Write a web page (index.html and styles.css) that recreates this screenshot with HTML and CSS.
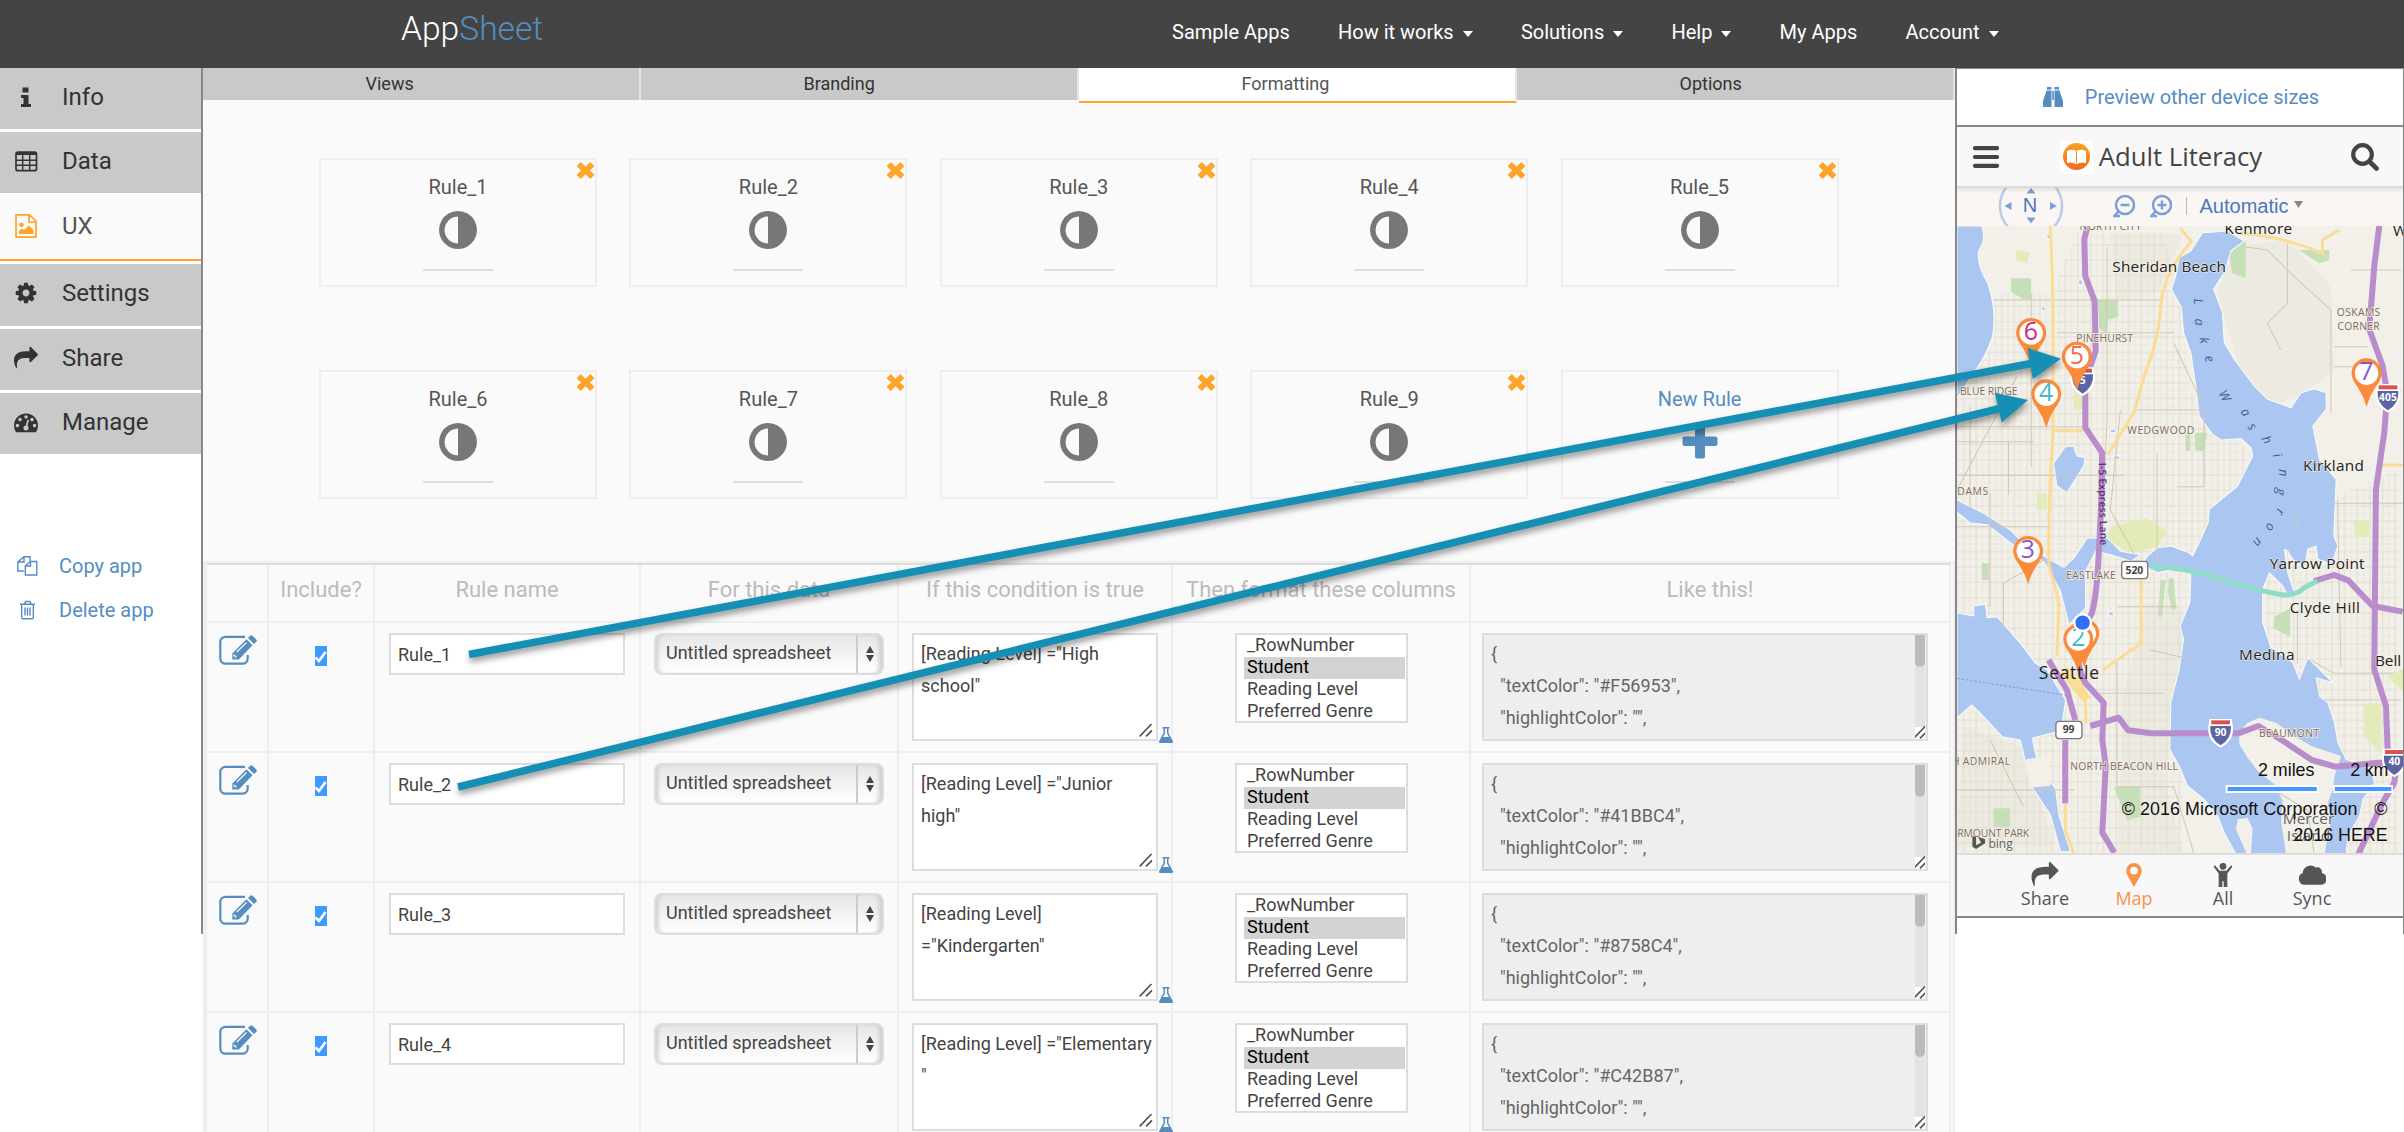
FILE: index.html
```html
<!DOCTYPE html>
<html lang="en">
<head>
<meta charset="utf-8">
<title>AppSheet - Formatting</title>
<link rel="stylesheet" href="styles.css">
</head>
<body>
<svg class="defs" width="0" height="0">
  <symbol id="i-share" viewBox="0 0 1792 1792"><path d="M1792 640q0 26-19 45l-512 512q-19 19-45 19t-45-19-19-45v-256h-224q-98 0-175.500 6t-154 21.500-133 42.500-105.500 69.500-80 101-48.500 138.500-17.500 181q0 55 5 123 0 6 2.500 23.500t2.500 26.500q0 15-8.500 25t-23.500 10q-16 0-28-17-7-9-13-22t-13.500-30-10.500-24q-127-285-127-451 0-199 53-333 162-403 875-403h224v-256q0-26 19-45t45-19 45 19l512 512q19 19 19 45z"/></symbol>
  <symbol id="i-cog" viewBox="0 0 1792 1792"><path d="M1152 896q0-106-75-181t-181-75-181 75-75 181 75 181 181 75 181-75 75-181zm512-109v222q0 12-8 23t-20 13l-185 28q-19 54-39 91 35 50 107 138 10 12 10 25t-9 23q-27 37-99 108t-94 71q-12 0-26-9l-138-108q-44 23-91 38-16 136-29 186-7 28-36 28h-222q-14 0-24.500-8.500t-11.500-21.500l-28-184q-49-16-90-37l-141 107q-10 9-25 9-14 0-25-11-126-114-165-168-7-10-7-23 0-12 8-23 15-21 51-66.500t54-70.500q-27-50-41-99l-183-27q-13-2-21-12.500t-8-23.500v-222q0-12 8-23t19-13l186-28q14-46 39-92-40-57-107-138-10-12-10-24 0-10 9-23 26-36 98.500-107.500t94.500-71.500q13 0 26 10l138 107q44-23 91-38 16-136 29-186 7-28 36-28h222q14 0 24.500 8.500t11.500 21.500l28 184q49 16 90 37l142-107q9-9 24-9 13 0 25 10 129 119 165 170 7 8 7 22 0 12-8 23-15 21-51 66.500t-54 70.500q26 50 41 98l183 28q13 2 21 12.500t8 23.500z"/></symbol>
  <symbol id="i-dash" viewBox="0 0 1792 1792"><path d="M384 1152q0-53-37.500-90.500t-90.500-37.500-90.500 37.500-37.500 90.500 37.500 90.500 90.500 37.500 90.500-37.500 37.500-90.500zm192-448q0-53-37.500-90.500t-90.500-37.500-90.500 37.500-37.500 90.500 37.500 90.500 90.500 37.500 90.500-37.500 37.500-90.500zm428 481l101-382q6-26-7.500-48.500t-38.500-29.500-48 6.500-30 39.500l-101 382q-60 5-107 43.500t-63 98.500q-20 77 20 146t117 89 146-20 89-117q16-60-6-117t-72-91zm660-33q0-53-37.500-90.500t-90.500-37.500-90.500 37.500-37.500 90.500 37.500 90.500 90.500 37.500 90.500-37.500 37.500-90.500zm-640-640q0-53-37.500-90.500t-90.500-37.500-90.500 37.500-37.500 90.500 37.500 90.500 90.500 37.500 90.500-37.500 37.500-90.500zm448 192q0-53-37.500-90.500t-90.500-37.500-90.500 37.500-37.500 90.500 37.500 90.500 90.500 37.500 90.500-37.500 37.500-90.500zm320 448q0 261-141 483-19 29-54 29h-1402q-35 0-54-29-141-221-141-483 0-182 71-348t191-286 286-191 348-71 348 71 286 191 191 286 71 348z"/></symbol>
  <symbol id="i-adjust" viewBox="128 128 1536 1536"><path d="M896 1440v-1088q-148 0-273 73t-198 198-73 273 73 273 198 198 273 73zm768-544q0 209-103 385.500t-279.500 279.500-385.500 103-385.500-103-279.500-279.500-103-385.500 103-385.500 279.500-279.500 385.500-103 385.500 103 279.500 279.500 103 385.500z"/></symbol>
  <symbol id="i-x" viewBox="0 0 16 16"><path d="M3.500 0 8 4.500 12.500 0 16 3.500V4.500L12 8l4 3.500v1L12.500 16 8 11.500 3.500 16 0 12.500v-1L4 8 0 4.500v-1z"/></symbol>
  <symbol id="i-edit" viewBox="0 0 38 31"><path d="M26 1.800H6.500a5.200 5.200 0 0 0-5.200 5.200V23.500a5.200 5.200 0 0 0 5.200 5.200H23.500a5.200 5.200 0 0 0 5.200-5.200V20" fill="none" stroke="currentColor" stroke-width="2.200"/><path d="M13.300 18.500 27.500 4.300l6 6L19.800 24.500h-6.500z"/><path d="M29 2.900 31 1a2 2 0 0 1 2.800 0l3.300 3.300a2 2 0 0 1 0 2.800L35 9z"/><path d="M17.800 17 27.500 7.500M15 19.500v1.500h1.700v1.700" stroke="#fafafa" stroke-width="1.200" fill="none"/></symbol>
  <symbol id="i-flask" viewBox="0 0 14 16"><path d="M3.500 0h7v1.500h-1V6l4.300 8c.5 1-.2 2-1.200 2H1.400C.4 16-.3 15 .2 14l4.300-8V1.500h-1zM6 1.500v5L4 10h6L8 6.500v-5z" fill-rule="evenodd"/></symbol>
  <symbol id="i-grip" viewBox="0 0 14 14"><path d="M.7 13.300 12.500 1M7 13.300l6-6" stroke="#555" stroke-width="1.700" fill="none"/></symbol>
</svg>

<header class="topbar">
  <div class="logo">App<span>Sheet</span></div>
  <nav class="topnav">
    <a>Sample Apps</a><a class="drop">How it works</a><a class="drop">Solutions</a><a class="drop">Help</a><a>My Apps</a><a class="drop">Account</a>
  </nav>
</header>

<div class="app">
  <aside class="sidebar">
    <nav class="menu">
      <a class="item first"><svg viewBox="0 0 24 24"><path d="M8.500 2.500h6v5h-6zM7 10h7.500v9H17v3H7v-3h2.500v-6H7z"/></svg>Info</a>
      <a class="item"><svg viewBox="0 0 24 24"><rect x="2" y="3.200" width="20.500" height="18.500" rx="2" fill="none" stroke="currentColor" stroke-width="1.700"/><path d="M2 3h20v3H2z"/><path d="M2 11.200h20M2 16.300h20M8.700 5v16M15.700 5v16" stroke="currentColor" stroke-width="1.400"/></svg>Data</a>
      <a class="item active"><svg viewBox="0 0 24 24"><path d="M2 .8h13.500L22 7v16.200H2zM15 1v7h7" fill="none" stroke="currentColor" stroke-width="1.700" stroke-linejoin="round"/><circle cx="7.500" cy="10.800" r="2.300"/><path d="M5 20v-3l3-2.500 2 1.500 5-4.500 4.500 4.500v4z"/></svg>UX</a>
      <a class="item"><svg><use href="#i-cog"/></svg>Settings</a>
      <a class="item"><svg><use href="#i-share"/></svg>Share</a>
      <a class="item"><svg><use href="#i-dash"/></svg>Manage</a>
    </nav>
    <div class="links">
      <a><svg viewBox="0 0 21 20"><path d="M7 5.500V.8h6v4M.8 6 7 .8V6H.8v9h6M8.300 10l5-4.500h6.500V19h-11.500zM13.500 5.500V10h-5" fill="none" stroke="currentColor" stroke-width="1.400"/></svg>Copy app</a>
      <a><svg viewBox="0 0 21 20"><path d="M3 4.200h15M7.500 4 8.500 1.500h4.500L14 4M4.700 4.500v13q0 1 1 1.200h9.600q1-.2 1-1.200v-13M8 7.500v8M10.500 7.500v8M13 7.500v8" fill="none" stroke="currentColor" stroke-width="1.400"/></svg>Delete app</a>
    </div>
  </aside>

  <main class="main">
    <nav class="tabs"><a>Views</a><a>Branding</a><a class="on">Formatting</a><a>Options</a></nav>
    <section class="cards">
      <div class="card"><svg class="x"><use href="#i-x"/></svg><b>Rule_1</b><svg class="ic"><use href="#i-adjust"/></svg><hr></div>
      <div class="card"><svg class="x"><use href="#i-x"/></svg><b>Rule_2</b><svg class="ic"><use href="#i-adjust"/></svg><hr></div>
      <div class="card"><svg class="x"><use href="#i-x"/></svg><b>Rule_3</b><svg class="ic"><use href="#i-adjust"/></svg><hr></div>
      <div class="card"><svg class="x"><use href="#i-x"/></svg><b>Rule_4</b><svg class="ic"><use href="#i-adjust"/></svg><hr></div>
      <div class="card"><svg class="x"><use href="#i-x"/></svg><b>Rule_5</b><svg class="ic"><use href="#i-adjust"/></svg><hr></div>
      <div class="card"><svg class="x"><use href="#i-x"/></svg><b>Rule_6</b><svg class="ic"><use href="#i-adjust"/></svg><hr></div>
      <div class="card"><svg class="x"><use href="#i-x"/></svg><b>Rule_7</b><svg class="ic"><use href="#i-adjust"/></svg><hr></div>
      <div class="card"><svg class="x"><use href="#i-x"/></svg><b>Rule_8</b><svg class="ic"><use href="#i-adjust"/></svg><hr></div>
      <div class="card"><svg class="x"><use href="#i-x"/></svg><b>Rule_9</b><svg class="ic"><use href="#i-adjust"/></svg><hr></div>
      <div class="card new"><b>New Rule</b><svg class="ic" viewBox="0 0 38 38"><path d="M14 3a2 2 0 0 1 2-2h6a2 2 0 0 1 2 2v10.500h10.500a2 2 0 0 1 2 2V21a2 2 0 0 1-2 2H24v10.500a2 2 0 0 1-2 2h-6a2 2 0 0 1-2-2V23H3.500a2 2 0 0 1-2-2v-5.500a2 2 0 0 1 2-2H14z"/></svg><hr></div>
    </section>

    <section class="rules">
      <div class="row head"><div></div><div>Include?</div><div>Rule name</div><div>For this data</div><div>If this condition is true</div><div>Then format these columns</div><div>Like this!</div></div>
      <div class="row">
        <div><svg class="edit"><use href="#i-edit"/></svg></div>
        <div><span class="check"><svg viewBox="0 0 12 20"><path d="M.5 11.500 4 15 10.500 6" /></svg></span></div>
        <div><div class="input">Rule_1</div></div>
        <div><div class="select"><span>Untitled spreadsheet</span><i><svg viewBox="0 0 8 16"><path d="M4 0l4 7H0zM0 9h8l-4 7z"/></svg></i></div></div>
        <div class="cond"><div class="area">[Reading Level] ="High<br>school"<svg class="grip"><use href="#i-grip"/></svg></div><svg class="flask"><use href="#i-flask"/></svg></div>
        <div><ul class="list"><li>_RowNumber</li><li class="sel">Student</li><li>Reading Level</li><li>Preferred Genre</li></ul></div>
        <div><div class="json"><pre>{
  "textColor": "#F56953",
  "highlightColor": "",</pre><span class="scroll"><svg><use href="#i-grip"/></svg></span></div></div>
      </div>
      <div class="row">
        <div><svg class="edit"><use href="#i-edit"/></svg></div>
        <div><span class="check"><svg viewBox="0 0 12 20"><path d="M.5 11.500 4 15 10.500 6" /></svg></span></div>
        <div><div class="input">Rule_2</div></div>
        <div><div class="select"><span>Untitled spreadsheet</span><i><svg viewBox="0 0 8 16"><path d="M4 0l4 7H0zM0 9h8l-4 7z"/></svg></i></div></div>
        <div class="cond"><div class="area">[Reading Level] ="Junior<br>high"<svg class="grip"><use href="#i-grip"/></svg></div><svg class="flask"><use href="#i-flask"/></svg></div>
        <div><ul class="list"><li>_RowNumber</li><li class="sel">Student</li><li>Reading Level</li><li>Preferred Genre</li></ul></div>
        <div><div class="json"><pre>{
  "textColor": "#41BBC4",
  "highlightColor": "",</pre><span class="scroll"><svg><use href="#i-grip"/></svg></span></div></div>
      </div>
      <div class="row">
        <div><svg class="edit"><use href="#i-edit"/></svg></div>
        <div><span class="check"><svg viewBox="0 0 12 20"><path d="M.5 11.500 4 15 10.500 6" /></svg></span></div>
        <div><div class="input">Rule_3</div></div>
        <div><div class="select"><span>Untitled spreadsheet</span><i><svg viewBox="0 0 8 16"><path d="M4 0l4 7H0zM0 9h8l-4 7z"/></svg></i></div></div>
        <div class="cond"><div class="area">[Reading Level]<br>="Kindergarten"<svg class="grip"><use href="#i-grip"/></svg></div><svg class="flask"><use href="#i-flask"/></svg></div>
        <div><ul class="list"><li>_RowNumber</li><li class="sel">Student</li><li>Reading Level</li><li>Preferred Genre</li></ul></div>
        <div><div class="json"><pre>{
  "textColor": "#8758C4",
  "highlightColor": "",</pre><span class="scroll"><svg><use href="#i-grip"/></svg></span></div></div>
      </div>
      <div class="row">
        <div><svg class="edit"><use href="#i-edit"/></svg></div>
        <div><span class="check"><svg viewBox="0 0 12 20"><path d="M.5 11.500 4 15 10.500 6" /></svg></span></div>
        <div><div class="input">Rule_4</div></div>
        <div><div class="select"><span>Untitled spreadsheet</span><i><svg viewBox="0 0 8 16"><path d="M4 0l4 7H0zM0 9h8l-4 7z"/></svg></i></div></div>
        <div class="cond"><div class="area">[Reading Level] ="Elementary<br>"<svg class="grip"><use href="#i-grip"/></svg></div><svg class="flask"><use href="#i-flask"/></svg></div>
        <div><ul class="list"><li>_RowNumber</li><li class="sel">Student</li><li>Reading Level</li><li>Preferred Genre</li></ul></div>
        <div><div class="json"><pre>{
  "textColor": "#C42B87",
  "highlightColor": "",</pre><span class="scroll"><svg><use href="#i-grip"/></svg></span></div></div>
      </div>
    </section>
  </main>

  <aside class="preview">
    <a class="sizes"><svg viewBox="0 0 20 20"><path d="M4 0h4.500v2.500H4zM11.500 0H16v2.500h-4.500zM3.500 3.500h5V20H0v-6zM11.500 3.500h5L20 14v6h-8.500zM9.200 4h1.600v9H9.200z"/></svg>Preview other device sizes</a>
    <div class="apphead">
      <svg class="bars" viewBox="0 0 26 22"><path d="M2 2.200h22M2 11h22M2 19.800h22" stroke="currentColor" stroke-width="4.200" stroke-linecap="round"/></svg>
      <div class="title"><svg viewBox="0 0 33 33"><defs><linearGradient id="g" x2="0" y2="1"><stop stop-color="#f9a41f"/><stop offset="1" stop-color="#ef6a22"/></linearGradient></defs><rect width="33" height="33" rx="5" fill="#fff"/><circle cx="16.500" cy="15.500" r="13.500" fill="url(#g)"/><path d="M7 10q5-2.500 9.500 0 4.500-2.500 9.500 0v12q-5-1.500-9.500 1-4.500-2.500-9.500-1z" fill="#fff"/><path d="M16.500 10v12" stroke="#f08a30" stroke-width="1"/></svg>Adult Literacy</div>
      <svg class="search" viewBox="0 0 28 28"><circle cx="11.500" cy="11.500" r="9.300" fill="none" stroke="currentColor" stroke-width="4.200"/><path d="M18.500 18.500 25.500 25.500" stroke="currentColor" stroke-width="4.600" stroke-linecap="round"/></svg>
    </div>
    <div class="maptools">
      <svg class="compass" viewBox="0 0 66 38"><circle cx="33" cy="18" r="31" fill="none" stroke="#b9cbe8" stroke-width="2.500"/><path d="M33 0l4.500 5.500h-9zM33 35.500l4.500-6h-9zM6.500 18l7-4v8zM59 18l-7-4v8z" fill="#7b9fd6"/><text x="32" y="24" text-anchor="middle">N</text></svg>
      <svg class="zoomer" viewBox="0 0 22 24"><circle cx="12" cy="11" r="9" /><path d="M5.500 17.500 1.500 22H7M7.500 11h9"/></svg>
      <svg class="zoomer" viewBox="0 0 22 24"><circle cx="12" cy="11" r="9" /><path d="M5.500 17.500 1.500 22H7M7.500 11h9M12 6.500v9"/></svg>
      <i></i><span>Automatic</span><svg class="tri" viewBox="0 0 9 7"><path d="M0 0h9L4.500 7z"/></svg>
    </div>
    <svg class="map" viewBox="21 498 1335 1881" preserveAspectRatio="none">
      <defs>
        <pattern id="streets" width="38" height="46" patternUnits="userSpaceOnUse"><path d="M0 3h38M3 0v46" stroke="#dcd8cc" stroke-width="2.500"/><path d="M0 26h38M22 0v46" stroke="#e4e0d5" stroke-width="1.500"/></pattern>
        <g id="pin"><path d="M-45 0a45 45 0 0 1 90 0q0 18-20 44Q8 70 0 100-8 70-25 44-45 18-45 0z" fill="#f98b3a"/><circle r="35" fill="#fff"/></g>
        <g id="shield"><path d="M-34-38h68q0 12 3 22 4 44-37 64-41-20-37-64 3-10 3-22z" fill="#fff"/><path d="M-28-34h56v12h-56z" fill="#d9534f"/><path d="M-31-17h62q3 38-31 58-34-20-31-58z" fill="#5b64a4"/></g>
      </defs>
      <rect x="21" y="498" width="1335" height="1881" fill="#f2f0e9"/>
      <g class="hills"><path d="M850 560 1010 540 1140 680 1150 930 1060 1000 960 1040 860 910 800 690zM590 1630 700 1640 690 1900 640 2150 700 2378H500L520 1900zM480 520h220l-80 180-120 20zM40 2000l180 60 90 300H21z"/></g>
      <path class="grid" d="M130 700H690L720 1000 900 1180 870 1290 720 1480 690 2378H21V1010L130 850zM940 1400l400-170v1150h-160l-80-350-150-250zM380 520h260l40 180H300z"/>
      <g class="park">
        <path d="M183 655h60v62h-25l-35-22zM443 720h60v50l-30 10-5 40-22-15zM885 540v115l-40-15-10-60zM705 1118h14v55h-14zM732 1118h38l-10 55h-25zM1045 570h90v30l-30 10zM490 2180h80v90l-40 10zM130 2245h50v55h-50zM970 1670l48-25v85l-50-25zM630 1560h15l-10 110h-12zM655 1555h14l8 90-12 5-12-50zM95 1510h22v50H95z"/>
        <path class="lime" d="M480 1400l110-25 60 40-30 45-80 20-70-40zM200 570l40 10-10 30-35-10zM1240 1930h50v150l-50-50zM1210 1380h45v50h-45zM1310 1850l46-25v70zM370 990h30v60h-30zM260 1300h30v50h-30z"/>
      </g>
      <g class="water">
        <path d="M21 498h74q14 40-8 72-10 40 26 100 28 80 14 160-20 60-50 100l-56 85z"/>
        <path transform="translate(21 498)" d="M735 20 700 75 665 95 655 150 642 190 672 245 678 320 700 380 715 480 725 570 765 625 790 642 850 638 880 665 885 690 860 740 840 780 755 850 752 890 720 960 705 990 695 980 640 960 600 965 570 990 555 1015 600 1040 650 1030 700 1045 697 1130 668 1200 678 1240 665 1330 640 1430 637 1570 665 1620 690 1680 740 1720 780 1770 800 1820 835 1885H1165L1170 1830 1205 1770 1215 1720 1250 1670 1240 1630 1165 1600 1140 1550 1130 1490 1110 1430 1085 1410 1075 1355 1125 1370 1050 1295 1025 1360 1005 1310 940 1265 915 1190 915 1090 935 1040 975 1080 990 1108 1010 1100 990 1040 980 970 990 975 1005 1000 1040 1025 1050 970 1075 960 1080 1000 1110 1010 1125 1005 1140 960 1128 930 1135 760 1085 700 1065 600 1105 550 1105 500 1070 488 1030 500 1000 545 930 520 890 480 830 400 800 350 795 260 768 190 800 140 820 75 860 45 810 15z"/>
        <path d="M21 1658l50 10v-30l35-5 5 40 30-3 70 80 45 60 35 20 30 50 25 40-10 70-15 25-75 20 20 90 50 60 10 80 35 110h-30l-30-110-60-90-30-135-55-10-55-60-35-35-45 38zM21 1320l80 40 80 50 40 40 80 50 40 22 30-28 40-60 60 0 40 40 60 10-30 20-60-20-45-10-30 60 0 110-50 50-25-100-50-90-80-40-90-70-50-5-61-50zM345 1160l-35 50 10 68 30 20 50-80 5-25-25-5-10-30z"/>
        <path d="M290 525l12-3v14h-12zM385 660h12v14h-12zM275 740h10v12h-10zM480 1108h16v10h-16zM490 1188h18v10h-18zM475 1655h14v12h-14z"/>
      </g>
      <path class="land" transform="translate(21 498)" d="M845 1520l25-30 35-15 50 15 40 30 65 40 90 30-20 60-5 40-15 40 10 50-20 105H985l-15-100 5-60-25-50-50-40-30-40-25-40zM840 1780l30-5 15 35-5 75h-12l-33-75zM205 1600l70-10 5 90-60 5z"/>
      <path class="ferry" d="M21 1855 180 1880 345 1905"/>
      <g class="street"><path d="M243 700v520M21 1100h380M130 720h500M320 818h350M470 560v520l-10 200M670 850l80 170M120 1300v340M21 1400h270M550 1050h210v230H680M510 1050l-30 300 70 130M880 560l70 10 80 80 110 100v310M1010 550v180l-60 60 40 80M1150 860h100M1150 1330h206M1120 1920h230M600 1770l130 30M500 2180h170l60 200M120 2040l100 200M21 2190h350M1160 1320l10 500M1080 1800l70 40h180M21 1290 200 950M280 1500 160 1570v140M500 1800v380M1200 630h150M1150 920h80M21 1145h230M21 1246h500M175 1145v160M620 1180v340M1140 930v100M60 1040v300M970 2190l100 60 20 130M1040 1420v-50M1040 1650v160M500 1640h180M430 1900h210"/></g>
      <g class="yroad"><path d="M300 498q12 200 8 620-14 220-12 400 26 80 30 120l-6 150M690 505l32 40q-80 90-90 180-4 110-50 220l-30 110-80 130M870 520q130 10 245 60V540l50-30M572 1540v210l-115 80M308 1112h90M380 1840l25 60 2 90M345 2230v80l25 70M1290 1215h66M1330 1000l20-10"/><path d="M340 1830l70 90" stroke-width="28"/></g>
      <g class="fwy">
        <path d="M412 498l-10 40 3 110 28 75 3 150-31 90v140l50 75q0 140-10 310-6 120-20 170l-40 80q-10 80 20 130l55 60-4 110 10 80-10 200 36 60M1285 498l-15 120-15 190 40 110 14 80-9 120-25 170-5 540 35 110 5 130 25 60-5 40-35 60-80 170M295 1800l55 90 25 90M345 2040v190M420 1998l85-25 28 38 70 9h260l60-22 70 42 90 60 70 20 130-12h70M1090 1563l60-18 42 16 73 77 90 17"/>
      </g>
      <path class="teal" d="M600 1520q100 0 200 35 130 40 200 50 40 0 60-22l40-20"/>
      <g class="area-l"><text x="378" y="847" textLength="170">PINEHURST</text><text x="388" y="509" textLength="185">NORTH CITY</text><text x="30" y="1006" textLength="172">BLUE RIDGE</text><text x="1158" y="768" textLength="130">OSKAMS</text><text x="1160" y="810" textLength="126">CORNER</text><text x="531" y="1122" textLength="200">WEDGWOOD</text><text x="22" y="1306" textLength="92">DAMS</text><text x="348" y="1557" textLength="148">EASTLAKE</text><text x="925" y="2031" textLength="180">BEAUMONT</text><text x="6" y="2115">H</text><text x="38" y="2115" textLength="142">ADMIRAL</text><text x="360" y="2131" textLength="322">NORTH BEACON HILL</text><text x="22" y="2331" textLength="215">RMOUNT PARK</text></g>
      <g class="city"><text x="822" y="521" textLength="202">Kenmore</text><text x="1326" y="528">W</text><text x="486" y="635" textLength="340">Sheridan Beach</text><text x="1057" y="1234" textLength="182">Kirkland</text><text x="957" y="1526" textLength="284">Yarrow Point</text><text x="1017" y="1659" textLength="210">Clyde Hill</text><text x="865" y="1801" textLength="166">Medina</text><text x="1272" y="1817">Bell</text><g class="dim"><text x="996" y="2291" textLength="154">Mercer</text><text x="1008" y="2344" textLength="130">Island</text></g></g>
      <g class="lake"><text transform="translate(730 716) rotate(85)">L</text><text transform="translate(733 776) rotate(85)">a</text><text transform="translate(747 834) rotate(80)">k</text><text transform="translate(762 890) rotate(75)">e</text><text transform="translate(803 1000) rotate(60)">W</text><text transform="translate(868 1056) rotate(52)">a</text><text transform="translate(890 1100) rotate(55)">s</text><text transform="translate(932 1136) rotate(60)">h</text><text transform="translate(966 1186) rotate(70)">i</text><text transform="translate(985 1228) rotate(88)">n</text><text transform="translate(980 1284) rotate(100)">g</text><text transform="translate(980 1344) rotate(115)">r</text><text transform="translate(955 1386) rotate(125)">o</text><text transform="translate(918 1430) rotate(130)">n</text></g>
      <text class="lane" transform="translate(445 1208) rotate(89)" textLength="248">I-5 Express Lane</text>
      <g class="route"><rect x="514" y="1504" width="78" height="52" rx="10"/><text x="552" y="1541">520</text><rect x="317" y="1984" width="78" height="52" rx="10"/><text x="355" y="2020">99</text></g>
      <g class="inter"><use href="#shield" x="397" y="960"/><text x="397" y="973">5</text><use href="#shield" x="1311" y="1010"/><text x="1311" y="1024">405</text><use href="#shield" x="810" y="2015"/><text x="810" y="2028">90</text><use href="#shield" x="1330" y="2104"/><text x="1330" y="2116">40</text></g>
      <g class="pins">
        <use href="#pin" x="243" y="819"/><text x="242" y="840" fill="#c42b87">6</text>
        <use href="#pin" x="380" y="890"/><text x="380" y="911" fill="#f56953">5</text>
        <use href="#pin" x="288" y="1003"/><text x="288" y="1024" fill="#41bbc4">4</text>
        <use href="#pin" x="1247" y="940"/><text x="1246" y="961" fill="#8758c4">7</text>
        <use href="#pin" x="234" y="1473"/><text x="233" y="1494" fill="#8758c4">3</text>
        <use href="#pin" x="402" y="1721"/><use href="#pin" x="384" y="1737"/><text x="384" y="1757" fill="#41bbc4">2</text>
      </g>
      <text class="seattle" x="266" y="1858" textLength="180">Seattle</text>
      <circle cx="397" cy="1688" r="25" fill="#2f6ff0" stroke="#fff" stroke-width="7"/>
      <path d="M825 2175h278v24H825zM1147 2175h179v24h-179z" fill="#fff"/><path d="M831 2181h267v12H831zM1152 2181h169v12h-169z" fill="#4399ff"/>
      <g class="legal"><text x="922" y="2148" textLength="169">2 miles</text><text x="1198" y="2148" textLength="114">2 km</text><text x="514" y="2265" textLength="706">© 2016 Microsoft Corporation</text><text x="1270" y="2265">©</text><text x="1028" y="2343" textLength="282">2016 HERE</text></g>
      <path d="M67 2328l11 4v24l15-8-9-18 21 8v12l-27 17-11-7z" fill="#555"/><text class="bing" x="115" y="2363" textLength="73">bing</text>
    </svg>
    <nav class="appnav">
      <a><svg><use href="#i-share"/></svg>Share</a>
      <a class="on"><svg viewBox="0 0 28 28"><path d="M14 2a8 8 0 0 1 8 8c0 2-.5 3.500-1.300 5L14 27 7.300 15C6.500 13.500 6 12 6 10a8 8 0 0 1 8-8zm0 4a4 4 0 1 0 0 8 4 4 0 0 0 0-8z" fill-rule="evenodd"/></svg>Map</a>
      <a><svg viewBox="0 0 28 28"><circle cx="14" cy="5.500" r="3.500"/><path d="M5.500 4.500l5 5.500h7l5-5.500 1.200 1.500-5.200 7V27h-3.800v-6h-1.400v6H9.500V13l-5.200-7z"/></svg>All</a>
      <a><svg viewBox="0 0 30 26"><path d="M7 24a6.500 6.500 0 0 1-2-12.500A8.500 8.500 0 0 1 19 5.500a5 5 0 0 1 6.500 6A6.300 6.300 0 0 1 24 24z"/></svg>Sync</a>
    </nav>
  </aside>
</div>

<svg class="arrows" viewBox="0 0 2404 1132">
  <path d="M469 654.500 2034 363M458 787 2002 408" stroke="#168fb5" stroke-width="7.500"/>
  <path d="M2027.700 348 2061 358.700 2032.700 379zM1994.700 392.700 2028 400 2001.700 422.500z" fill="#168fb5"/>
</svg>
</body>
</html>
```
FILE: styles.css
```css
* { box-sizing: border-box; }
body { margin: 0; width: 2404px; height: 1132px; overflow: hidden; background: #fff; font-family: Roboto, "Liberation Sans", sans-serif; color: #333; position: relative; }
svg { fill: currentColor; display: block; flex: none; }
.defs { position: absolute; }

.topbar { height: 68px; background: #444; display: flex; align-items: flex-start; color: #fff; }
.logo { width: 771px; margin-left: 401px; font-size: 33.600px; font-weight: 300; line-height: 57px; }
.logo span { color: #558dc0; }
.topnav { display: flex; gap: 48.200px; font-size: 20px; line-height: 65px; white-space: nowrap; }
.drop { display: flex; align-items: center; gap: 9px; }
.drop::after { content: ""; border: 5.500px solid transparent; border-top: 6px solid #fff; border-bottom: 0; margin-top: 3px; }

.app { display: flex; align-items: flex-start; height: 1064px; }
.sidebar { width: 203px; height: 866px; border-right: 2px solid #888; }
.menu { display: flex; flex-direction: column; gap: 3px; }
.item { display: flex; align-items: center; gap: 24px; height: 61.200px; padding: 0 0 3px 14px; background: #c9c9c9; font-size: 24px; }
.item svg { width: 24px; height: 24px; }
.item.first { padding-bottom: 4px; }
.item.active { background: #fafafa; border-bottom: 2px solid #ffa428; height: 67px; margin-top: -2px; padding-bottom: 2px; color: #555; }
.item.active svg { color: #ffa428; }
.links { margin-top: 97px; display: flex; flex-direction: column; gap: 14px; padding-left: 17px; font-size: 20px; line-height: 30px; color: #558dc0; }
.links a { display: flex; align-items: center; gap: 21px; }
.links svg { width: 21px; height: 20px; }

.main { width: 1752px; height: 1064px; background: #fafafa; overflow: hidden; }
.tabs { display: flex; align-items: flex-start; height: 35px; }
.tabs a { width: 438px; height: 32px; padding-left: 162.500px; background: #c9c9c9; border-right: 2px solid #e4e4e4; font-size: 18px; line-height: 32px; }
.tabs .on { background: #fff; height: 35px; border-bottom: 2px solid #ffa428; color: #555; }
.cards { display: grid; grid-template-columns: repeat(5, 278px); column-gap: 32.400px; row-gap: 83px; padding: 55px 0 0 116px; height: 458px; align-content: start; }
.card { position: relative; height: 129px; border: 2px solid #eee; display: flex; flex-direction: column; align-items: center; padding-top: 12px; color: #777; }
.card b { font-weight: 400; font-size: 20px; line-height: 30px; color: #555; }
.card .x { position: absolute; right: 1px; top: 1.500px; width: 17px; height: 17px; color: #ffa428; }
.card .ic { width: 38px; height: 38px; margin-top: 9px; }
.card hr { width: 70px; height: 2px; border: 0; background: #ddd; margin: 20px 0 0; }
.card.new, .card.new b { color: #558dc0; }

.rules { border: solid #eee; border-width: 2px 2px 0 4px; padding-right: 2px; }
.row { display: grid; grid-template-columns: 62px 106px 266px 258px 274px 298px 480px; height: 130px; }
.row > div { border: solid #eee; border-width: 0 2px 2px 0; padding-top: 10px; position: relative; }
.row.head { height: 60px; border-top: 2px solid #ddd; font-size: 22px; line-height: 49px; text-align: center; color: #bbb; white-space: nowrap; }
.row.head > div { padding: 0; }
.edit { width: 38px; height: 31px; margin: 2px 0 0 12px; color: #558dc0; }
.check { display: block; width: 12px; height: 20px; margin: 13px auto 0; background: #3d9bff; }
.check path { fill: none; stroke: #fff; stroke-width: 2.600; }
.input { width: 236px; height: 42px; margin-left: 14px; border: 2px solid #ddd; background: #fff; padding-left: 7px; font-size: 18px; line-height: 40px; color: #444; }
.select { display: flex; width: 230px; height: 42px; margin-left: 13px; border: 2px solid #ddd; border-radius: 8px; background: linear-gradient(#e6e6e6, #fff); box-shadow: inset 4px 0 4px -2px #ccc, inset -5px 0 4px -2px #ccc; font-size: 18px; line-height: 36px; color: #444; padding-left: 10px; white-space: nowrap; }
.select span { width: 190px; }
.select i { border-left: 2px solid #ccc; padding: 11px 0 0 8px; }
.select svg { width: 8px; height: 16px; }
.area { position: relative; width: 246px; height: 108px; margin-left: 13px; border: 2px solid #ddd; background: #fff; padding: 3px 0 0 7px; font-size: 18px; line-height: 32px; color: #444; white-space: nowrap; }
.grip { position: absolute; right: 3px; bottom: 2px; width: 14px; height: 14px; }
.flask { position: absolute; left: 260px; bottom: 8px; width: 14px; height: 16px; color: #558dc0; z-index: 1; }
.list { list-style: none; margin: 0 0 0 62px; padding: 0 1px 0 7px; width: 173px; height: 90px; border: 2px solid #ddd; background: #fff; font-size: 18px; line-height: 20px; color: #444; }
.list li { padding-left: 3px; height: 22px; }
.list .sel { background: #d3d3d3; color: #000; }
.json { display: flex; justify-content: space-between; width: 446px; height: 108px; margin-left: 11px; border: 2px solid #ddd; background: #eee; font-size: 18px; line-height: 32px; color: #666; padding: 0 1px 0 7px; }
.json pre { margin: 3px 0 0; font: inherit; }
.scroll { width: 10px; background: linear-gradient(#fff, #fff) 0 100% / 10px 12px no-repeat #e3e3e3; display: flex; flex-direction: column; justify-content: space-between; overflow: hidden; }
.scroll::before { content: ""; height: 32px; background: #bbb; border-radius: 0 0 5px 5px; }
.scroll svg { width: 14px; height: 14px; margin-left: -2px; }

.preview { width: 449px; height: 866px; border: solid #888; border-width: 1px 1px 0 2px; }
.sizes { display: flex; align-items: center; justify-content: center; gap: 22px; height: 58px; padding: 0 0 1px 2px; border-bottom: 2px solid #888; font-size: 20px; color: #558dc0; }
.sizes svg { width: 20px; height: 20px; }
.apphead { display: flex; align-items: center; height: 61px; background: #f8f8f8; border-bottom: 2px solid #ddd; color: #444; padding: 1px 24px 0 16px; justify-content: space-between; font-family: "Open Sans", sans-serif; font-size: 25.700px; line-height: 34px; position: relative; box-shadow: 0 2px 4px rgba(0,0,0,.1); }
.bars { width: 26px; height: 22px; }
.title { display: flex; align-items: center; gap: 6px; margin-right: 20px; margin-left: -8px; }
.title svg { width: 33px; height: 33px; }
.search { width: 28px; height: 28px; }
.maptools { display: flex; height: 38px; background: #faf6f3; padding-left: 41px; font: 20px/36px "Liberation Sans", sans-serif; color: #4a78c0; }
.compass { width: 66px; height: 38px; }
.compass text { fill: #4a78c0; }
.zoomer { width: 22px; height: 24px; margin: 6px 0 0 49px; }
.zoomer + .zoomer { margin-left: 15px; }
.zoomer * { fill: none; stroke: #7b9fd6; stroke-width: 2.500; }
.maptools i { width: 1px; height: 18px; background: #bbb; margin: 9px 12.500px 0 14px; }
.tri { width: 9px; height: 7px; margin: 13px 0 0 6px; color: #888; }
.map { width: 446px; height: 627px; font-family: "Open Sans", "Noto Sans", sans-serif; }
.hills { fill: #e9e7dc; opacity: .6; }
.grid { fill: url(#streets); }
.park { fill: #c6dfb8; }
.lime { fill: #e3ebb9; }
.water { fill: #abc7f1; stroke: #fbfbf8; stroke-width: 3; stroke-linejoin: round; }
.land { fill: #f2f0e9; }
.ferry { fill: none; stroke: #7f9fd6; stroke-width: 3; stroke-dasharray: 8 5; }
.street path { fill: none; stroke: #cdc8b8; stroke-width: 3; }
.yroad { fill: none; stroke: #fbdc95; stroke-width: 9; }
.fwy path { fill: none; stroke: #b98dcc; stroke-width: 18; stroke-linejoin: round; }
.teal { fill: none; stroke: #8edcc8; stroke-width: 15; }
.area-l { font-size: 31px; fill: #806a5c; stroke: #f4f1ea; stroke-width: 4; paint-order: stroke; }
.city { font-size: 46px; fill: #222; stroke: #f4f1ea; stroke-width: 3; paint-order: stroke; }
.city .dim { fill: #666; font-size: 46px; }
.seattle { font-size: 52px; fill: #222; }
.lake { font-size: 38px; font-style: italic; fill: #3d5f93; }
.lane { font-size: 31px; font-weight: 600; fill: #5c2f78; }
.route rect { fill: #fff; stroke: #777; stroke-width: 4; }
.route text, .inter text { font-size: 31px; font-weight: 700; text-anchor: middle; fill: #444; }
.inter text { fill: #fff; }
.pins text { font-size: 74px; font-weight: 400; text-anchor: middle; }
.legal { font-family: "Liberation Sans", sans-serif; font-size: 53.500px; fill: #111; }
.bing { font-size: 36px; fill: #666; }
.appnav { display: flex; height: 65px; border-top: 2px solid #ddd; border-bottom: 2px solid #888; background: #f8f8f8; padding-left: 43.500px; font: 18px/20px "Open Sans", sans-serif; color: #555; }
.appnav a { width: 89px; display: flex; flex-direction: column; align-items: center; padding-top: 6px; }
.appnav svg { width: 28px; height: 27px; }
.appnav .on { color: #f9924a; }
.arrows { position: absolute; left: 0; top: 0; width: 2404px; height: 1132px; filter: drop-shadow(1px 4px 3px rgba(0,0,0,.4)); }
```
